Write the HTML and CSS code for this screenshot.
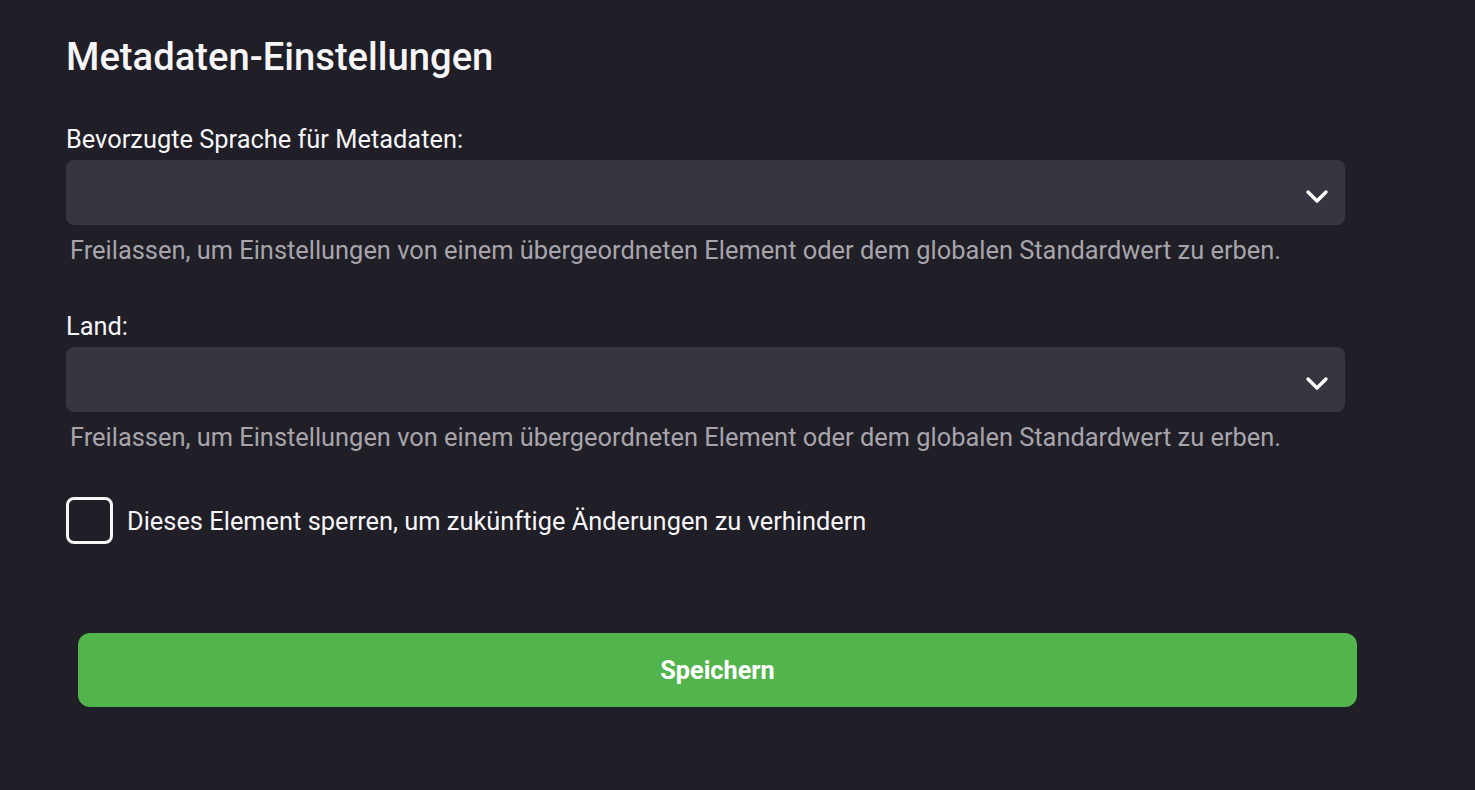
FILE: index.html
```html
<!DOCTYPE html>
<html lang="de">
  <head>
    <meta charset="UTF-8" />
    <meta name="viewport" content="width=device-width, initial-scale=1.0" />
    <title>Metadaten-Einstellungen</title>
    <link rel="stylesheet" href="styles.css">
  </head>
  <body>
    <main class="page">
      <h1 class="title">Metadaten-Einstellungen</h1>

      <div class="field">
        <label class="field-label" for="lang">Bevorzugte Sprache für Metadaten:</label>
        <div class="select">
          <select id="lang"><option></option></select>
          <svg class="chevron" viewBox="0 0 24 24" width="24" height="24">
            <path d="M3 7 L12 16 L21 7" fill="none" stroke="#fff" stroke-width="3.4" stroke-linecap="round" stroke-linejoin="round" />
          </svg>
        </div>
        <p class="field-help">Freilassen, um Einstellungen von einem übergeordneten Element oder dem globalen Standardwert zu erben.</p>
      </div>

      <div class="field">
        <label class="field-label" for="country">Land:</label>
        <div class="select">
          <select id="country"><option></option></select>
          <svg class="chevron" viewBox="0 0 24 24" width="24" height="24">
            <path d="M3 7 L12 16 L21 7" fill="none" stroke="#fff" stroke-width="3.4" stroke-linecap="round" stroke-linejoin="round" />
          </svg>
        </div>
        <p class="field-help">Freilassen, um Einstellungen von einem übergeordneten Element oder dem globalen Standardwert zu erben.</p>
      </div>

      <label class="check">
        <span class="check-box"></span>
        <span class="check-text">Dieses Element sperren, um zukünftige Änderungen zu verhindern</span>
      </label>

      <div class="actions">
        <button class="save">Speichern</button>
      </div>
    </main>
  </body>
</html>
```

FILE: styles.css
```css
* {
  padding: 0;
  margin: 0;
  box-sizing: border-box;
}

body {
  background: #201e27;
  color: #f5f5f7;
  font-family: Roboto, "Liberation Sans", sans-serif;
  height: 100vh;
}

.page {
  width: 1279px;
  margin-left: 66px;
  padding-top: 32px;
}

.title {
  font-size: 38.2px;
  font-weight: 500;
  line-height: 50px;
  margin-bottom: 39px;
}

.field {
  margin-bottom: 40px;
}

.field-label {
  display: block;
  font-size: 25.4px;
  line-height: 36px;
  margin-bottom: 3px;
}

.select {
  position: relative;
  height: 65px;
}

.select select {
  appearance: none;
  width: 100%;
  height: 100%;
  border: none;
  border-radius: 8px;
  background: #383440;
  color: #fff;
  font-size: 25.4px;
  outline: none;
}

.chevron {
  position: absolute;
  right: 16px;
  top: 25px;
  pointer-events: none;
}

.field-help {
  color: #a7a5ab;
  font-size: 25.4px;
  line-height: 36px;
  padding-left: 4px;
  margin-top: 7px;
}

.check {
  display: flex;
  align-items: center;
  gap: 14px;
  padding-top: 2px;
}

.check-box {
  width: 47px;
  height: 47px;
  border: 3px solid #f5f5f7;
  border-radius: 8px;
}

.check-text {
  font-size: 25.4px;
}

.actions {
  padding-top: 89px;
  margin: 0 -12px 0 12px;
}

.save {
  width: 100%;
  height: 74px;
  border: none;
  border-radius: 12px;
  background: #52b44c;
  color: #fff;
  font-family: Roboto, "Liberation Sans", sans-serif;
  font-size: 25.3px;
  font-weight: 700;
}
```
